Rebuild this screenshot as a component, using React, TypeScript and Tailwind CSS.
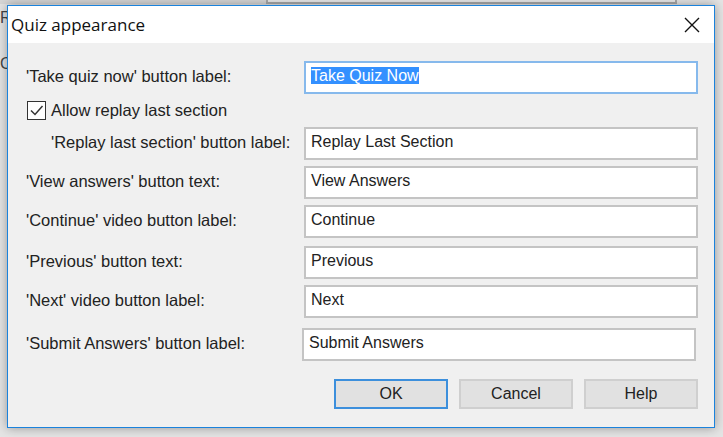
import { useState } from "react";

const fields = [
  { key: "view", label: "'View answers' button text:", value: "View Answers", mt: "mt-[6px]" },
  { key: "continue", label: "'Continue' video button label:", value: "Continue", mt: "mt-[6px]" },
  { key: "previous", label: "'Previous' button text:", value: "Previous", mt: "mt-[8px]" },
  { key: "next", label: "'Next' video button label:", value: "Next", mt: "mt-[6px]" },
];

const Field = ({ value, focused }: { value: string; focused?: boolean }) => (
  <div
    className={
      "h-[33px] w-[394px] bg-white px-[5px] pt-[3px] text-[16px] leading-[20px] text-[#222] " +
      (focused ? "border-2 border-[#86b9ec]" : "border-2 border-[#c4c4c4]")
    }
  >
    {focused ? <span className="bg-[#3390ff] text-white">{value}</span> : value}
  </div>
);

const Button = ({ label, isDefault }: { label: string; isDefault?: boolean }) => (
  <button
    className={
      "h-[30px] w-[114px] bg-[#e1e1e1] text-[16px] text-[#222] " +
      (isDefault ? "border-2 border-[#3c8fdc]" : "border-2 border-[#cfcfcf]")
    }
  >
    {label}
  </button>
);

export default function App() {
  const [replay, setReplay] = useState(true);

  return (
    <div className="relative h-[437px] w-[723px] overflow-hidden bg-[#e4e4e4] font-['Liberation_Sans',sans-serif]">
      {/* window behind */}
      <div className="absolute left-0 top-0 h-[4px] w-[268px] bg-[#d6d6d6]" />
      <div className="absolute left-[266px] top-[-4px] h-[8px] w-[411px] border-2 border-[#a8a8a8] bg-[#e9e9e9]" />
      <div className="absolute left-0 top-[6px] text-[16px] text-[#444]">R</div>
      <div className="absolute left-0 top-[52px] text-[16px] text-[#444]">C</div>

      {/* dialog */}
      <div className="absolute left-[7px] top-[5px] flex h-[423px] w-[708px] flex-col border-[1.5px] border-[#1a82dc] bg-[#f0f0f0] shadow-[0_0_10px_rgba(0,0,0,0.35)]">
        <div className="flex h-[37px] items-center justify-between bg-white pl-[3px] pr-[14px]">
          <span className="font-['Open_Sans',sans-serif] text-[17px] text-[#111]">Quiz appearance</span>
          <svg width="16" height="16" viewBox="0 0 16 16" className="text-[#111]">
            <path d="M1 1 L15 15 M15 1 L1 15" stroke="currentColor" strokeWidth="1.4" />
          </svg>
        </div>

        <div className="flex flex-col pl-[18px] pr-[16px] text-[16.5px] text-[#222]">
          <div className="mt-[18px] flex items-start justify-between">
            <span className="pt-[3px]">'Take quiz now' button label:</span>
            <Field value="Take Quiz Now" focused />
          </div>

          <div className="flex h-[33px] items-center gap-[5px]">
            <button
              onClick={() => setReplay((v) => !v)}
              className="ml-[1px] flex h-[19px] w-[19px] items-center justify-center border border-[#333] bg-white"
            >
              {replay && (
                <svg width="15" height="15" viewBox="0 0 15 15">
                  <path d="M2 7.5 L6 11.5 L13.5 3" fill="none" stroke="#333" strokeWidth="1.5" />
                </svg>
              )}
            </button>
            <span className="-mt-[1px]">Allow replay last section</span>
          </div>

          <div className="flex items-start justify-between">
            <span className="pl-[25px] pt-[3px]">'Replay last section' button label:</span>
            <Field value="Replay Last Section" />
          </div>

          {fields.map((f) => (
            <div key={f.key} className={"flex items-start justify-between " + f.mt}>
              <span className="pt-[3px]">{f.label}</span>
              <Field value={f.value} />
            </div>
          ))}

          <div className="mt-[10px] flex items-start justify-between pr-[2px]">
            <span className="pt-[3px]">'Submit Answers' button label:</span>
            <Field value="Submit Answers" />
          </div>

          <div className="mt-[18px] flex justify-end gap-[11px]">
            <Button label="OK" isDefault />
            <Button label="Cancel" />
            <Button label="Help" />
          </div>
        </div>
      </div>
    </div>
  );
}
